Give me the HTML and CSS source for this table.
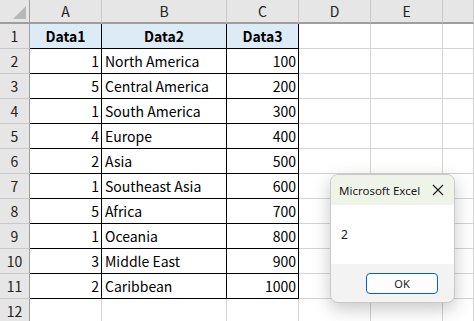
FILE: index.html
```html
<!DOCTYPE html>
<html lang="ja">
<head>
  <meta charset="UTF-8" />
  <title>Excel</title>
  <link rel="stylesheet" href="styles.css">
</head>
<body>
  <div class="sheet">
    <div class="corner"><span class="tri"></span></div>
    <div class="colhead">A</div>
    <div class="colhead">B</div>
    <div class="colhead">C</div>
    <div class="colhead">D</div>
    <div class="colhead">E</div>
    <div class="colhead"></div>

    <div class="rowhead">1</div>
    <div class="cell tb head">Data1</div>
    <div class="cell tb head">Data2</div>
    <div class="cell tb head">Data3</div>
    <div class="cell"></div><div class="cell"></div><div class="cell"></div>

    <div class="rowhead">2</div>
    <div class="cell tb num">1</div><div class="cell tb">North America</div><div class="cell tb num">100</div>
    <div class="cell"></div><div class="cell"></div><div class="cell"></div>

    <div class="rowhead">3</div>
    <div class="cell tb num">5</div><div class="cell tb">Central America</div><div class="cell tb num">200</div>
    <div class="cell"></div><div class="cell"></div><div class="cell"></div>

    <div class="rowhead">4</div>
    <div class="cell tb num">1</div><div class="cell tb">South America</div><div class="cell tb num">300</div>
    <div class="cell"></div><div class="cell"></div><div class="cell"></div>

    <div class="rowhead">5</div>
    <div class="cell tb num">4</div><div class="cell tb">Europe</div><div class="cell tb num">400</div>
    <div class="cell"></div><div class="cell"></div><div class="cell"></div>

    <div class="rowhead">6</div>
    <div class="cell tb num">2</div><div class="cell tb">Asia</div><div class="cell tb num">500</div>
    <div class="cell"></div><div class="cell"></div><div class="cell"></div>

    <div class="rowhead">7</div>
    <div class="cell tb num">1</div><div class="cell tb">Southeast Asia</div><div class="cell tb num">600</div>
    <div class="cell"></div><div class="cell"></div><div class="cell"></div>

    <div class="rowhead">8</div>
    <div class="cell tb num">5</div><div class="cell tb">Africa</div><div class="cell tb num">700</div>
    <div class="cell"></div><div class="cell"></div><div class="cell"></div>

    <div class="rowhead">9</div>
    <div class="cell tb num">1</div><div class="cell tb">Oceania</div><div class="cell tb num">800</div>
    <div class="cell"></div><div class="cell"></div><div class="cell"></div>

    <div class="rowhead">10</div>
    <div class="cell tb num">3</div><div class="cell tb">Middle East</div><div class="cell tb num">900</div>
    <div class="cell"></div><div class="cell"></div><div class="cell"></div>

    <div class="rowhead">11</div>
    <div class="cell tb num">2</div><div class="cell tb">Caribbean</div><div class="cell tb num">1000</div>
    <div class="cell"></div><div class="cell"></div><div class="cell"></div>

    <div class="rowhead">12</div>
    <div class="cell"></div><div class="cell"></div><div class="cell"></div>
    <div class="cell"></div><div class="cell"></div><div class="cell"></div>
  </div>

  <!-- メッセージボックス -->
  <div class="msgbox">
    <div class="msg-title">
      <span>Microsoft Excel</span>
      <svg class="close" width="12" height="12" viewBox="0 0 12 12">
        <path d="M1 1 L11 11 M11 1 L1 11" stroke="#1a1a1a" stroke-width="1.1" fill="none" />
      </svg>
    </div>
    <div class="msg-body">2</div>
    <div class="msg-foot">
      <button class="ok">OK</button>
    </div>
  </div>
</body>
</html>
```

FILE: styles.css
```css
/* シート */
:root { --grid: #d4d4d4; --hdr: #e6e6e6; --hdr-line: #c8c8c8; --hdr-edge: #9e9e9e; --blue: #ddebf7; }
* { margin: 0; padding: 0; box-sizing: border-box; }
body {
  background: #fff;
  font-family: "Noto Sans CJK JP", "Noto Sans", sans-serif;
  color: #000;
  overflow: hidden;
  width: 474px; height: 321px;
}
.sheet {
  display: grid;
  grid-template-columns: 30px 72px 125px 72px 72px 72px 1fr;
  grid-template-rows: 24px repeat(12, 25px);
  width: 474px;
}
.corner, .colhead, .rowhead {
  background: var(--hdr);
  color: #222;
  font-size: 14px;
  display: flex; align-items: center; justify-content: center;
}
.corner {
  border-right: 1px solid var(--hdr-edge);
  border-bottom: 2px solid var(--hdr-edge);
  position: relative;
}
.corner .tri {
  position: absolute; right: 3px; bottom: 3px;
  width: 0; height: 0;
  border-left: 13px solid transparent;
  border-bottom: 13px solid #b8b8b8;
}
.colhead {
  border-right: 1px solid var(--hdr-line);
  border-bottom: 2px solid var(--hdr-edge);
}
.rowhead {
  border-right: 1px solid var(--hdr-edge);
  border-bottom: 1px solid var(--hdr-line);
}
.cell {
  border-right: 1px solid var(--grid);
  border-bottom: 1px solid var(--grid);
  font-size: 14px;
  line-height: 24px;
  padding: 0 3px;
  white-space: nowrap; overflow: hidden;
}
.cell.tb { border-right-color: #000; border-bottom-color: #000; }
.cell.head { background: var(--blue); font-weight: bold; text-align: center; }
.cell.num { text-align: right; padding-right: 2px; }

/* ダイアログ */
.msgbox {
  position: absolute; left: 330px; top: 174px;
  width: 125px; height: 129px;
  background: #f3f3f3;
  border: 1px solid #c9c9c9;
  border-radius: 8px;
  box-shadow: 0 6px 18px rgba(0,0,0,0.22);
  font-family: "Noto Sans", "Open Sans", sans-serif;
  overflow: hidden;
  display: flex; flex-direction: column;
}
.msg-title {
  height: 30px;
  background: #eff4e9;
  display: flex; align-items: center; justify-content: space-between;
  padding: 0 8px 0 8px;
  font-size: 11.5px; color: #1a1a1a;
}
.msg-title .close { margin-right: 2px; }
.msg-body {
  height: 59px;
  background: #fff;
  font-size: 12px;
  padding: 21px 0 0 10px;
  color: #1a1a1a;
}
.msg-foot {
  flex: 1;
  display: flex; justify-content: flex-end; align-items: flex-start;
  padding: 9px 16px 0 0;
}
.ok {
  width: 72px; height: 21px;
  background: #fdfdfd;
  border: 1px solid #0067c0;
  border-radius: 4px;
  font-family: inherit; font-size: 11px; color: #1a1a1a;
}
```
